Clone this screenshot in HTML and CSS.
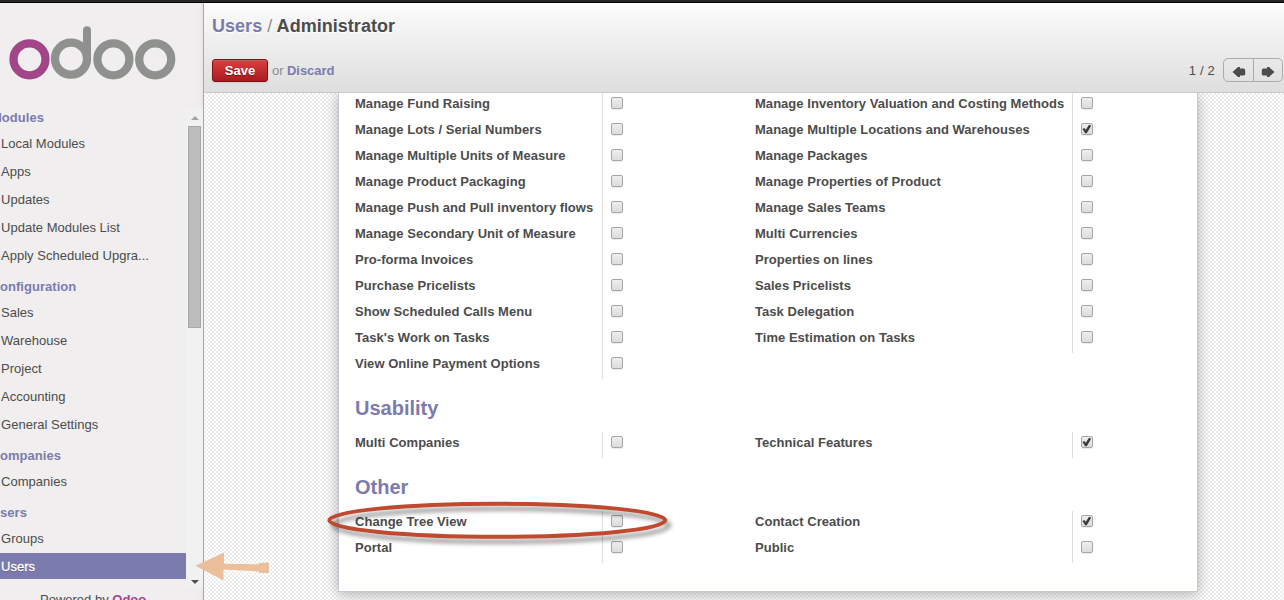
FILE: index.html
```html
<!DOCTYPE html>
<html lang="en">
<head>
<meta charset="utf-8">
<title>Users / Administrator</title>
<link rel="stylesheet" href="styles.css">
</head>
<body>
<div class="topbar"></div>
<div class="app">
  <aside class="sidebar">
    <div class="logo">
      <svg width="180" height="60" viewBox="0 0 180 60" fill="none" stroke="#8f918f" stroke-width="8.3">
        <circle cx="29.5" cy="36.3" r="16" stroke="#a24689"/>
        <circle cx="71" cy="35.700" r="16"/>
        <path d="M87 35.700V7.200" stroke-width="8" stroke-linecap="round"/>
        <circle cx="113.400" cy="36.3" r="16"/>
        <circle cx="155.200" cy="36.3" r="16"/>
      </svg>
    </div>
    <div class="menu-wrap">
      <nav class="menu">
        <h4 class="clip-m">Modules</h4>
        <ul><li>Local Modules</li><li>Apps</li><li>Updates</li><li>Update Modules List</li><li>Apply Scheduled Upgra...</li></ul>
        <h4>onfiguration</h4>
        <ul><li>Sales</li><li>Warehouse</li><li>Project</li><li>Accounting</li><li>General Settings</li></ul>
        <h4>ompanies</h4>
        <ul><li>Companies</li></ul>
        <h4>sers</h4>
        <ul><li>Groups</li><li class="active">Users</li></ul>
      </nav>
      <div class="scrollbar">
        <i class="up"></i><div class="thumb"></div><i class="down"></i>
      </div>
    </div>
    <footer class="powered">Powered by <b>Odoo</b></footer>
  </aside>
  <main class="main">
    <header class="header">
      <h2 class="crumbs"><a>Users</a> <span>/</span> Administrator</h2>
      <div class="toolbar">
        <button class="save">Save</button>
        <span class="or">or <b>Discard</b></span>
        <span class="count">1 / 2</span>
        <div class="pager">
          <span><svg width="14" height="12" viewBox="0 0 14 12"><path d="M.5 6 6 1H8V2.500H12L13.200 3.800V8.500L12 9.500H8V11H6Z" fill="#4c4c4c"/></svg></span>
          <span><svg width="14" height="12" viewBox="0 0 14 12"><path d="M13.500 6 8 1H6V2.500H2L.8 3.800V8.500L2 9.500H6V11H8Z" fill="#4c4c4c"/></svg></span>
        </div>
      </div>
    </header>
    <div class="content">
      <section class="sheet">
        <div class="groups">
          <div class="col left">
            <div class="row"><label>Manage Fund Raising</label><i class="box"></i></div>
            <div class="row"><label>Manage Lots / Serial Numbers</label><i class="box"></i></div>
            <div class="row"><label>Manage Multiple Units of Measure</label><i class="box"></i></div>
            <div class="row"><label>Manage Product Packaging</label><i class="box"></i></div>
            <div class="row"><label>Manage Push and Pull inventory flows</label><i class="box"></i></div>
            <div class="row"><label>Manage Secondary Unit of Measure</label><i class="box"></i></div>
            <div class="row"><label>Pro-forma Invoices</label><i class="box"></i></div>
            <div class="row"><label>Purchase Pricelists</label><i class="box"></i></div>
            <div class="row"><label>Show Scheduled Calls Menu</label><i class="box"></i></div>
            <div class="row"><label>Task's Work on Tasks</label><i class="box"></i></div>
            <div class="row"><label>View Online Payment Options</label><i class="box"></i></div>
          </div>
          <div class="col right">
            <div class="row"><label>Manage Inventory Valuation and Costing Methods</label><i class="box"></i></div>
            <div class="row"><label>Manage Multiple Locations and Warehouses</label><i class="box on"></i></div>
            <div class="row"><label>Manage Packages</label><i class="box"></i></div>
            <div class="row"><label>Manage Properties of Product</label><i class="box"></i></div>
            <div class="row"><label>Manage Sales Teams</label><i class="box"></i></div>
            <div class="row"><label>Multi Currencies</label><i class="box"></i></div>
            <div class="row"><label>Properties on lines</label><i class="box"></i></div>
            <div class="row"><label>Sales Pricelists</label><i class="box"></i></div>
            <div class="row"><label>Task Delegation</label><i class="box"></i></div>
            <div class="row"><label>Time Estimation on Tasks</label><i class="box"></i></div>
          </div>
        </div>
        <h3>Usability</h3>
        <div class="groups">
          <div class="col left"><div class="row"><label>Multi Companies</label><i class="box"></i></div></div>
          <div class="col right"><div class="row"><label>Technical Features</label><i class="box on"></i></div></div>
        </div>
        <h3>Other</h3>
        <div class="groups">
          <div class="col left">
            <div class="row"><label>Change Tree View</label><i class="box"></i></div>
            <div class="row"><label>Portal</label><i class="box"></i></div>
          </div>
          <div class="col right">
            <div class="row"><label>Contact Creation</label><i class="box on"></i></div>
            <div class="row"><label>Public</label><i class="box"></i></div>
          </div>
        </div>
      </section>
    </div>
  </main>
</div>
<svg class="annotations" width="1284" height="600" viewBox="0 0 1284 600">
  <ellipse class="ring" cx="497.300" cy="520.300" rx="168" ry="16.500"/>
  <path d="M195.500 565.700 224 552.500V563.700L259 564.300V563L269 562.500V573H259V571.500L223.500 569.500V580.500Z" fill="#ecbf9c"/>
</svg>
</body>
</html>
```
FILE: styles.css
```css
* { box-sizing: border-box; }
body {
  margin: 0;
  width: 1284px;
  height: 600px;
  overflow: hidden;
  font: 13px/26px "Liberation Sans", Arial, sans-serif;
  color: #4c4c4c;
  background: #fff;
}
h2, h3, h4, ul { margin: 0; padding: 0; list-style: none; }
.topbar { height: 3px; background: #252525; border-bottom: 1px solid #000; }
.app { display: flex; height: 597px; }

.sidebar {
  display: flex;
  flex-direction: column;
  width: 204px;
  flex: none;
  background: #f0eeee;
  border-right: 1px solid #a6a6a6;
  box-shadow: inset -4px 0 6px -5px rgba(0, 0, 0, .1);
}
.logo { flex: none; height: 96px; padding-top: 20px; }
.logo svg { display: block; }
.menu-wrap { flex: none; display: flex; height: 489px; }
.menu { width: 186px; overflow: hidden; }
.menu h4 {
  height: 31px;
  padding-top: 6px;
  font-size: 13px;
  color: #7c7bad;
  white-space: nowrap;
  letter-spacing: .04px;
}
.menu .clip-m { text-indent: -9px; }
.menu li { height: 26px; padding-left: 1px; line-height: 28px; white-space: nowrap; letter-spacing: .02px; }
.menu li + li { margin-top: 2px; }
.menu .active { background: #7c7bad; color: #fff; text-shadow: 0 1px 1px rgba(0, 0, 0, .3); -webkit-text-stroke: .3px #fff; }
.scrollbar {
  display: flex;
  flex-direction: column;
  align-items: center;
  width: 17px;
  margin-top: 10px;
  padding: 7px 0 4px;
  background: #f1f1f1;
}
.up, .down { width: 0; height: 0; border: 4px solid transparent; }
.up { border-top: 0; border-bottom-color: #a3a3a3; }
.down { border-bottom: 0; border-top-color: #505050; margin-top: auto; }
.thumb { width: 13px; height: 202px; margin-top: 6px; background: #bcbcbc; border: 1px solid #a8a8a8; }
.powered { flex: none; height: 24px; padding-left: 40px; line-height: 23px; }
.powered b { color: #a24689; }

.main { flex: 1; display: flex; flex-direction: column; min-width: 0; }
.header {
  flex: none;
  height: 90px;
  padding: 10px 1px 0 8px;
  background: linear-gradient(#fcfcfc, #dedede);
  border-bottom: 1px solid #cacaca;
}
.crumbs { font-size: 18px; line-height: 26px; letter-spacing: .03px; text-shadow: 0 1px 1px #fff; }
.crumbs a { color: #7c7bad; }
.crumbs span { color: #8c8c8c; font-weight: normal; }
.toolbar { display: flex; align-items: center; height: 24px; margin-top: 19px; }
.save {
  width: 56px;
  height: 23px;
  padding: 1px 0 0;
  border: 1px solid #7d1114;
  border-radius: 3px;
  background: linear-gradient(#dc3f41, #a81b1e);
  box-shadow: 0 1px 2px rgba(0, 0, 0, .1), inset 0 1px 1px rgba(155, 155, 155, .4);
  color: #fff;
  font: bold 13px/20px "Liberation Sans", Arial, sans-serif;
  text-shadow: 0 1px 1px rgba(0, 0, 0, .4);
}
.or { margin-left: 4px; padding-top: 2px; color: #8c8c8c; letter-spacing: -.05px; }
.or b { color: #7c7bad; }
.count { margin-left: auto; margin-right: 8px; padding-top: 2px; letter-spacing: .2px; }
.pager { display: flex; width: 60px; height: 24px; border: 1px solid #ababab; border-radius: 5px; }
.pager span { display: flex; align-items: center; justify-content: center; width: 30px; padding: 4px 0 0 1px; }
.pager span + span { width: 29px; padding: 4px 1px 0 0; border-left: 1px solid #ababab; }
.pager svg { flex: none; }

.content {
  flex: 1;
  overflow: hidden;
  padding-left: 134px;
  background: repeating-conic-gradient(#ececec 0 25%, #fff 0 50%) 0 0 / 4px 4px;
}
.sheet {
  width: 860px;
  height: 499px;
  padding-left: 16px;
  background: #fff;
  border: 1px solid #c8c8d3;
  border-top: 0;
  box-shadow: 0 2px 14px rgba(0, 0, 0, .3);
}
.groups { display: flex; align-items: flex-start; }
.left { width: 400px; }
.row { display: flex; height: 26px; font-weight: bold; }
.row label { height: 26px; line-height: 21px; white-space: nowrap; border-right: 1px solid #ddd; letter-spacing: .035px; }
.left label { width: 248px; }
.right label { width: 318px; }
.box {
  width: 12px;
  height: 12px;
  margin: 4px 0 0 8px;
  border: 1px solid #a6a6a6;
  border-radius: 2px;
  background: linear-gradient(#eee, #dcdcdc);
  box-shadow: 0 1px 1px rgba(0, 0, 0, .08);
}
.on::after {
  content: "";
  display: block;
  width: 10px;
  height: 10px;
  background: #3c3c3c;
  clip-path: polygon(5% 50%, 22% 40%, 38% 57%, 70% 8%, 92% 18%, 48% 92%, 32% 92%);
}
.sheet h3 { height: 53px; padding-top: 16px; font-size: 20px; color: #7c7bad; }

/* hand-drawn callouts over the page */
.annotations { position: absolute; left: 0; top: 0; pointer-events: none; }
.ring { fill: none; stroke: #c04a30; stroke-width: 4; filter: drop-shadow(4px 5px 2px rgba(0, 0, 0, .4)); }
```
